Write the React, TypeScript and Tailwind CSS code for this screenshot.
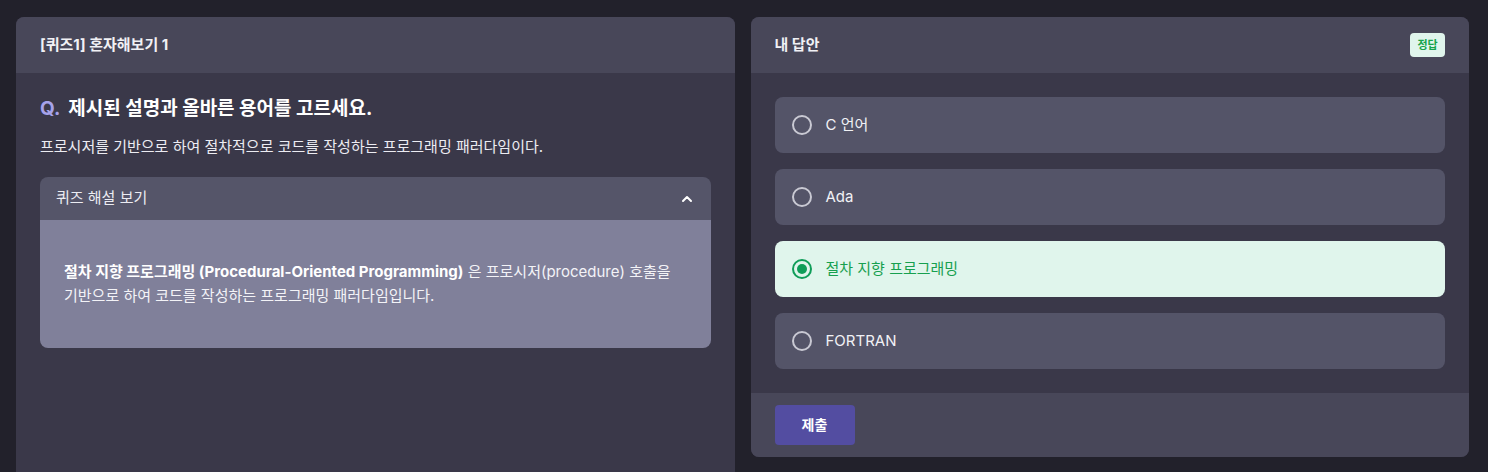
import { ChevronUp } from "lucide-react";

const options = [
  { id: "c", label: "C 언어", correct: false },
  { id: "ada", label: "Ada", correct: false },
  { id: "proc", label: "절차 지향 프로그래밍", correct: true },
  { id: "fortran", label: "FORTRAN", correct: false },
];

function Radio({ checked }: { checked: boolean }) {
  if (checked) {
    return (
      <span className="flex h-5 w-5 shrink-0 items-center justify-center rounded-full border-2 border-[#0f9d58]">
        <span className="h-2.5 w-2.5 rounded-full bg-[#0f9d58]" />
      </span>
    );
  }
  return <span className="h-5 w-5 shrink-0 rounded-full border-2 border-[#c9c9d3]" />;
}

export default function App() {
  return (
    <div
      className="min-h-[472px] bg-[#22212b] pl-4 pr-[19px] pt-[17px]"
      style={{ fontFamily: 'Inter, "Noto Sans CJK KR", sans-serif' }}
    >
      <div className="grid grid-cols-2 items-start gap-4">
        {/* left: question */}
        <div className="flex min-h-[455px] flex-col overflow-hidden rounded-t-lg bg-[#3a3849]">
          <div className="flex h-14 items-center bg-[#484759] px-6">
            <span className="text-[15px] font-bold text-[#f1f1f5]">[퀴즈1] 혼자해보기 1</span>
          </div>
          <div className="px-6 pt-[22px]">
            <h2 className="flex items-center gap-2 text-[19px] font-bold leading-7 text-white">
              <span className="text-[#a6a2ea]">Q.</span>
              제시된 설명과 올바른 용어를 고르세요.
            </h2>
            <p className="mt-[14px] text-[15px] leading-5 text-[#ececf2]">
              프로시저를 기반으로 하여 절차적으로 코드를 작성하는 프로그래밍 패러다임이다.
            </p>
            <div className="mt-5 overflow-hidden rounded-lg">
              <div className="flex h-[43px] items-center justify-between bg-[#555569] pl-4 pr-4">
                <span className="text-[15px] text-[#ececf2]">퀴즈 해설 보기</span>
                <ChevronUp className="h-4 w-4 text-white" strokeWidth={3} />
              </div>
              <div className="bg-[#80809a] px-6 py-10 text-[15px] leading-6 text-[#f3f3f7]">
                <span className="font-bold text-white">
                  절차 지향 프로그래밍 (Procedural-Oriented Programming)
                </span>{" "}
                은 프로시저(procedure) 호출을 기반으로 하여 코드를 작성하는 프로그래밍 패러다임입니다.
              </div>
            </div>
          </div>
        </div>

        {/* right: answer */}
        <div className="overflow-hidden rounded-lg bg-[#3a3849]">
          <div className="flex h-14 items-center justify-between bg-[#484759] px-6">
            <span className="text-[15px] font-bold text-[#f1f1f5]">내 답안</span>
            <span className="flex h-6 w-[35px] items-center justify-center rounded-sm bg-[#e0f5ec] text-[11px] font-bold text-[#16a34a]">
              정답
            </span>
          </div>
          <div className="flex flex-col gap-4 px-6 py-6">
            {options.map((opt) => (
              <div
                key={opt.id}
                className={
                  opt.correct
                    ? "flex h-14 items-center gap-[14px] rounded-lg bg-[#e0f5ec] px-[17px]"
                    : "flex h-14 items-center gap-[14px] rounded-lg bg-[#545468] px-[17px]"
                }
              >
                <Radio checked={opt.correct} />
                <span className={opt.correct ? "text-[15px] text-[#17a04f]" : "text-[15px] text-[#f1f1f5]"}>
                  {opt.label}
                </span>
              </div>
            ))}
          </div>
          <div className="flex h-16 items-center bg-[#484759] px-6">
            <button
              type="button"
              className="h-10 w-20 rounded-sm bg-[#534da1] text-sm font-bold text-white"
            >
              제출
            </button>
          </div>
        </div>
      </div>
    </div>
  );
}
